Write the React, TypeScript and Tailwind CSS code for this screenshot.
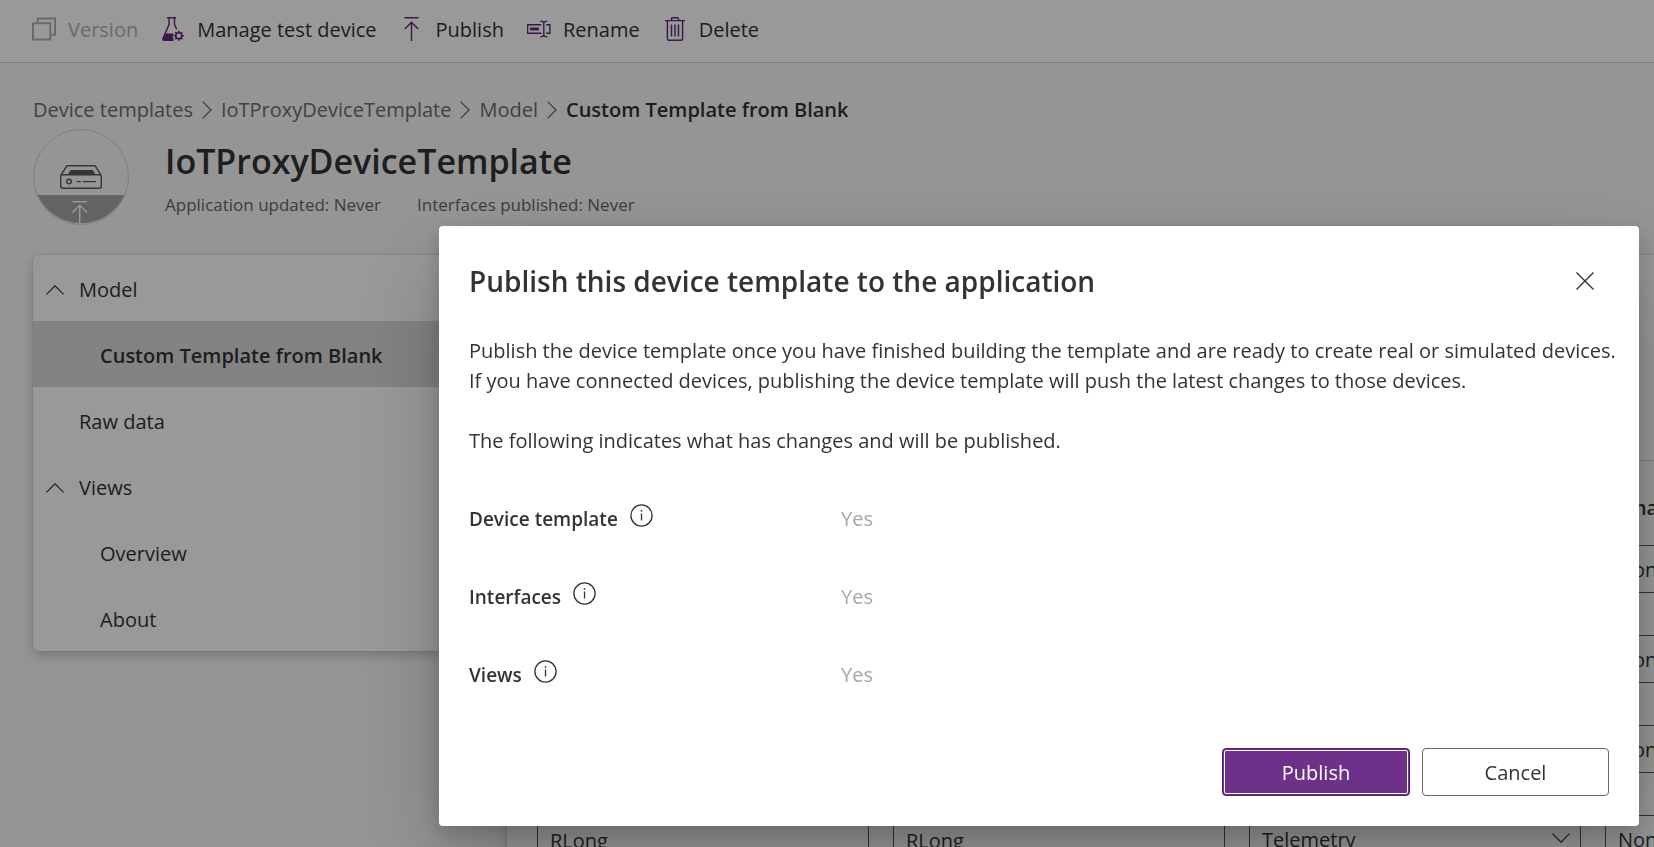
import type { ReactNode } from "react";

const PURPLE = "#5f2878";

function VersionIcon() {
  return (
    <svg width="25" height="24" viewBox="0 0 25 24" fill="none" stroke="#b0b0b0" strokeWidth="2" aria-hidden="true">
      <rect x="1" y="6" width="18" height="17" />
      <path d="M6 5V1H24V18H20" />
    </svg>
  );
}

function FlaskIcon() {
  return (
    <svg width="22" height="24" viewBox="0 0 22 24" fill="none" stroke={PURPLE} strokeWidth="1.4" aria-hidden="true">
      <path d="M5 .8H14M7 .8V7.5L1 21.5Q.6 23.3 2 23.3H11M12.5 .8V7.5L14.8 12.4" />
      <path d="M3.4 16.5H10.6L12 17.5L10.6 19L12 23.4H2Q.8 23 1.2 22Z" fill={PURPLE} stroke="none" />
      <circle cx="16.8" cy="18.8" r="3" strokeWidth="1.6" />
      <path
        strokeWidth="1.6"
        d="M16.8 13.8V15.8M16.8 21.8V23.8M11.8 18.8H13.8M19.8 18.8H21.8M13.3 15.3L14.7 16.7M18.9 20.9L20.3 22.3M20.3 15.3L18.9 16.7M14.7 20.9L13.3 22.3"
      />
    </svg>
  );
}

function PublishIcon() {
  return (
    <svg width="15" height="24" viewBox="0 0 15 24" fill="none" stroke={PURPLE} strokeWidth="1.4" aria-hidden="true">
      <path d="M.5 .7H14.5M7.5 5V24M.8 12L7.5 5.2L14.2 12" />
    </svg>
  );
}

function RenameIcon() {
  return (
    <svg width="25" height="18" viewBox="0 0 25 18" fill="none" stroke={PURPLE} strokeWidth="1.4" aria-hidden="true">
      <path d="M15 4.6H.7V13.4H15M20 4.6H23.8V13.4H20" />
      <path d="M3.2 9H12.4" strokeWidth="3" />
      <path d="M13.8 .8Q17.5 .8 17.5 3.5Q17.5 .8 21.2 .8M17.5 3V15M13.8 17.2Q17.5 17.2 17.5 14.5Q17.5 17.2 21.2 17.2" />
    </svg>
  );
}

function DeleteIcon() {
  return (
    <svg width="20" height="24" viewBox="0 0 20 24" fill="none" stroke={PURPLE} strokeWidth="1.4" aria-hidden="true">
      <path d="M0 3.6H20M6.5 3.6V1.8Q6.5 .7 7.5 .7H12.5Q13.5 .7 13.5 1.8V3.6" />
      <path d="M2.4 3.6V21.4Q2.4 23.2 4 23.2H16Q17.6 23.2 17.6 21.4V3.6M6.5 7.5V19.5M10 7.5V19.5M13.5 7.5V19.5" />
    </svg>
  );
}

function ChevronRight() {
  return (
    <svg width="10" height="18" viewBox="0 0 10 18" fill="none" stroke="#666" strokeWidth="1.3" aria-hidden="true">
      <path d="M.6 .6L9 9L.6 17.4" />
    </svg>
  );
}

function ChevronUp() {
  return (
    <svg width="18" height="10" viewBox="0 0 18 10" fill="none" stroke="#333" strokeWidth="1.2" aria-hidden="true">
      <path d="M.5 9.3L9 .8L17.5 9.3" />
    </svg>
  );
}

function ChevronDown() {
  return (
    <svg width="18" height="10" viewBox="0 0 18 10" fill="none" stroke="#333" strokeWidth="1.2" aria-hidden="true">
      <path d="M.5 .7L9 9.2L17.5 .7" />
    </svg>
  );
}

function InfoIcon() {
  return (
    <svg width="23" height="23" viewBox="0 0 23 23" fill="none" stroke="#333" strokeWidth="1.3" aria-hidden="true">
      <circle cx="11.5" cy="11.5" r="10.6" />
      <path d="M11.5 9.5V16.5" />
      <circle cx="11.5" cy="6.8" r=".9" fill="#333" stroke="none" />
    </svg>
  );
}

function DeviceBadge() {
  return (
    <svg className="shrink-0" width="96" height="96" viewBox="0 0 96 96" fill="none" aria-hidden="true">
      <path d="M4.6 66H91.4A47.5 47.5 0 0 1 4.6 66Z" fill="#a5a5a3" />
      <circle cx="48" cy="48" r="47.5" stroke="#d2d2d2" />
      <g stroke="#5a5a5a" strokeWidth="1.4">
        <path d="M28 46L34 36.7H62L68 46" />
        <rect x="27.7" y="45.7" width="40.6" height="13.6" rx="2" />
        <circle cx="36" cy="52.6" r="2.3" />
        <path d="M43.6 52.6H47.8M49.6 52.6H63" />
      </g>
      <path d="M37.5 41H60L62.5 46H34.5Z" fill="#5a5a5a" />
      <path d="M39.5 72.8H54M46.7 76.5V94M39.5 83.5L46.7 76.3L54 83.5" stroke="#fff" strokeWidth="1.5" />
    </svg>
  );
}

function ToolbarButton({ icon, label, disabled }: { icon: ReactNode; label: string; disabled?: boolean }) {
  return (
    <button type="button" disabled={disabled} className="flex items-center gap-3 text-[#333] disabled:text-[#b0b0b0]">
      <span className="flex w-6 justify-center pb-0.5">{icon}</span>
      {label}
    </button>
  );
}

const crumbs = ["Device templates", "IoTProxyDeviceTemplate", "Model"];

function NavGroup({ label }: { label: string }) {
  return (
    <button type="button" className="flex h-[66px] w-full items-center gap-[15px] pt-[3px] pl-[13px] text-left">
      <ChevronUp />
      {label}
    </button>
  );
}

function SelectField({ label, value }: { label: string; value: string }) {
  return (
    <div className="relative">
      <select
        aria-label={label}
        defaultValue={value}
        className="h-12 w-full appearance-none rounded-sm border border-[#555] bg-white px-3 pt-0.5"
      >
        <option>{value}</option>
      </select>
      <span className="pointer-events-none absolute top-[18px] right-[11px]">
        <ChevronDown />
      </span>
    </div>
  );
}

const fieldRows = [
  { display: "", name: "", type: "" },
  { display: "", name: "", type: "" },
  { display: "", name: "", type: "" },
  { display: "RLong", name: "RLong", type: "Telemetry" },
];

function FieldTable() {
  const input = "h-12 w-full rounded-sm border border-[#555] bg-white px-3 pt-0.5";
  return (
    <table className="w-[1424px] table-fixed">
      <thead>
        <tr className="h-[84px] text-left align-middle">
          <th aria-label="Display name" />
          <th aria-label="Name" />
          <th aria-label="Capability type" />
          <th className="pt-2.5 font-semibold">Semantic type</th>
        </tr>
      </thead>
      <tbody>
        {fieldRows.map((row, i) => (
          <tr key={i} className="h-[90px] align-top">
            <td className="pr-6">
              <input aria-label="Display name" defaultValue={row.display} className={input} />
            </td>
            <td className="pr-6">
              <input aria-label="Name" defaultValue={row.name} className={input} />
            </td>
            <td className="pr-6">
              <SelectField label="Capability type" value={row.type} />
            </td>
            <td className="pr-6">
              <SelectField label="Semantic type" value="None" />
            </td>
          </tr>
        ))}
      </tbody>
    </table>
  );
}

const changes = ["Device template", "Interfaces", "Views"];

function PublishDialog() {
  return (
    <div
      role="dialog"
      aria-modal="true"
      aria-labelledby="dialog-title"
      className="flex min-h-[600px] w-[1200px] max-w-full flex-col rounded-sm bg-white px-[30px] pt-[35px] pb-[30px] text-[#333] shadow-[0_7px_21px_rgba(0,0,0,0.18),0_38px_87px_rgba(0,0,0,0.22)]"
    >
      <div className="flex items-center justify-between pr-[15px]">
        <h2 id="dialog-title" className="text-[28px] leading-10 font-semibold">
          Publish this device template to the application
        </h2>
        <button type="button" aria-label="Close">
          <svg width="18" height="18" viewBox="0 0 18 18" fill="none" stroke="#333" strokeWidth="1.4" aria-hidden="true">
            <path d="M.5 .5L17.5 17.5M17.5 .5L.5 17.5" />
          </svg>
        </button>
      </div>
      <p className="-mr-5 mt-[35px]">
        Publish the device template once you have finished building the template and are ready to create real or
        simulated devices.
        <br />
        If you have connected devices, publishing the device template will push the latest changes to those devices.
      </p>
      <p className="mt-[30px]">The following indicates what has changes and will be published.</p>
      <dl className="mt-12 flex flex-col gap-12">
        {changes.map((name) => (
          <div key={name} className="flex">
            <dt className="flex w-[372px] items-start gap-3 text-[19px] font-semibold">
              {name}
              <InfoIcon />
            </dt>
            <dd className="text-[#a6a6a6]">Yes</dd>
          </div>
        ))}
      </dl>
      <div className="mt-auto flex justify-end gap-3">
        <button
          type="button"
          className="h-12 w-[188px] rounded-sm border border-[#54206c] bg-[#6e318a] pt-0.5 text-white outline-1 -outline-offset-3 outline-white"
        >
          Publish
        </button>
        <button type="button" className="h-12 w-[187px] rounded-sm border border-[#666] bg-white pt-0.5">
          Cancel
        </button>
      </div>
    </div>
  );
}

export default function App() {
  return (
    <div className="h-screen overflow-hidden bg-[#f8f8f8] font-['Open_Sans','Noto_Sans',sans-serif] text-[20px] leading-[30px] text-[#333]">
      <header className="flex h-[63px] items-center gap-[23px] border-b border-[#d4d4d4] bg-white px-8 pb-0.5">
        <ToolbarButton icon={<VersionIcon />} label="Version" disabled />
        <ToolbarButton icon={<FlaskIcon />} label="Manage test device" />
        <ToolbarButton icon={<PublishIcon />} label="Publish" />
        <ToolbarButton icon={<RenameIcon />} label="Rename" />
        <ToolbarButton icon={<DeleteIcon />} label="Delete" />
      </header>

      <main className="pt-8 pl-[33px]">
        <nav aria-label="Breadcrumb">
          <ol className="flex items-center gap-[9px] text-[#6e6e6e]">
            {crumbs.map((crumb) => (
              <li key={crumb} className="flex items-center gap-[9px]">
                <a href="#">{crumb}</a>
                <ChevronRight />
              </li>
            ))}
            <li aria-current="page" className="font-semibold text-[#333]">
              Custom Template from Blank
            </li>
          </ol>
        </nav>

        <div className="mt-1 flex gap-9">
          <DeviceBadge />
          <div className="pt-2">
            <h1 className="text-[34px] leading-12 font-semibold text-[#333]">IoTProxyDeviceTemplate</h1>
            <div className="mt-2 flex gap-9 text-[17px] leading-6 text-[#666]">
              <span>Application updated: Never</span>
              <span>Interfaces published: Never</span>
            </div>
          </div>
        </div>

        <div className="mt-[30px] flex items-start gap-[30px]">
          <nav
            aria-label="Template sections"
            className="w-[444px] shrink-0 overflow-hidden rounded-md bg-white shadow-[0_5px_12px_rgba(0,0,0,0.18),0_0_2px_rgba(0,0,0,0.2)]"
          >
            <NavGroup label="Model" />
            <a href="#" className="flex h-[66px] items-center bg-[#dadada] pt-[3px] pl-[67px] font-semibold">
              Custom Template from Blank
            </a>
            <a href="#" className="flex h-[66px] items-center pt-[3px] pl-[46px]">
              Raw data
            </a>
            <NavGroup label="Views" />
            <a href="#" className="flex h-[66px] items-center pt-[3px] pl-[67px]">
              Overview
            </a>
            <a href="#" className="flex h-[66px] items-center pt-[3px] pl-[67px]">
              About
            </a>
          </nav>
          <section
            aria-label="Capabilities"
            className="flex-1 overflow-hidden rounded-tl-md bg-white shadow-[0_5px_12px_rgba(0,0,0,0.18),0_0_2px_rgba(0,0,0,0.2)]"
          >
            <div className="h-[205px]" />
            <div className="border-t border-[#c8c8c8] pl-[30px]">
              <FieldTable />
            </div>
          </section>
        </div>
      </main>

      <div className="fixed inset-0 flex items-start justify-end bg-black/40 pt-[226px] pr-[15px]">
        <PublishDialog />
      </div>
    </div>
  );
}
